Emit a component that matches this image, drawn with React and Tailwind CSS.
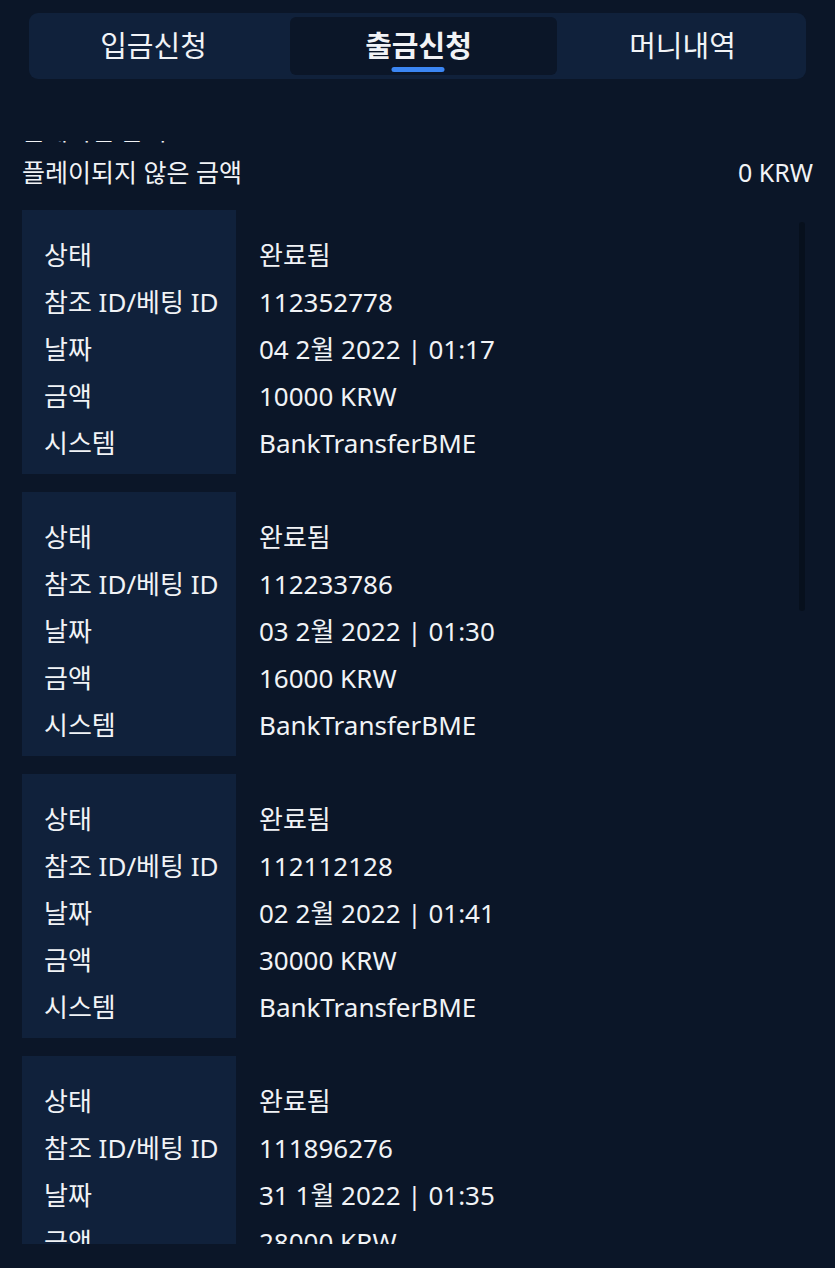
const records = [
  { status: "완료됨", id: "112352778", date: "04 2월 2022 | 01:17", amount: "10000 KRW", system: "BankTransferBME" },
  { status: "완료됨", id: "112233786", date: "03 2월 2022 | 01:30", amount: "16000 KRW", system: "BankTransferBME" },
  { status: "완료됨", id: "112112128", date: "02 2월 2022 | 01:41", amount: "30000 KRW", system: "BankTransferBME" },
  { status: "완료됨", id: "111896276", date: "31 1월 2022 | 01:35", amount: "28000 KRW", system: "BankTransferBME" },
];

const labels = ["상태", "참조 ID/베팅 ID", "날짜", "금액", "시스템"];

function RecordCard({ r }) {
  const values = [r.status, r.id, r.date, r.amount, r.system];
  return (
    <div className="flex">
      <div className="w-[214px] shrink-0 bg-[#10213b] pl-[22px] pt-[22px] pb-[7px]">
        {labels.map((l) => (
          <div key={l} className="h-[47px] leading-[47px] whitespace-nowrap">{l}</div>
        ))}
      </div>
      <div className="pl-[23px] pt-[22px] pb-[7px]">
        {values.map((v, i) => (
          <div key={i} className="h-[47px] leading-[47px] whitespace-nowrap">{v}</div>
        ))}
      </div>
    </div>
  );
}

export default function App() {
  return (
    <div
      className="w-[835px] h-[1268px] bg-[#0b1628] text-[#f1f3f6] overflow-hidden"
      style={{ fontFamily: '"Noto Sans", "Noto Sans CJK KR", sans-serif' }}
    >
      <div className="px-[29px] pt-[13px]">
        <div className="h-[66px] rounded-[9px] bg-[#10213b] p-[4px] grid grid-cols-[257px_267px_1fr] text-[29px]">
          <div className="flex items-center justify-center pr-[16px]">입금신청</div>
          <div className="rounded-[6px] bg-[#0b1628] flex items-center justify-center pr-[10px]">
            <div className="relative font-bold">
              출금신청
              <div className="absolute left-1/2 -translate-x-1/2 top-[43px] w-[53px] h-[5px] rounded-full bg-[#3b86f3]" />
            </div>
          </div>
          <div className="flex items-center justify-center pl-[6px]">머니내역</div>
        </div>
      </div>

      <div className="relative mt-[62px] h-[1103px] overflow-hidden px-[22px]">
        <div className="-mt-[28px] flex justify-between items-center h-[36px] text-[25px]">
          <span>플레이된 금액</span>
        </div>
        <div className="mt-[7px] flex justify-between items-center h-[34px] text-[25px]">
          <span>플레이되지 않은 금액</span>
          <span>0 KRW</span>
        </div>
        <div className="mt-[20px] flex flex-col gap-[18px] text-[26px]">
          {records.map((r) => (
            <RecordCard key={r.id} r={r} />
          ))}
        </div>
        <div className="absolute right-[30px] top-[81px] w-[6px] h-[389px] rounded-full bg-[#07101d]" />
      </div>
    </div>
  );
}
